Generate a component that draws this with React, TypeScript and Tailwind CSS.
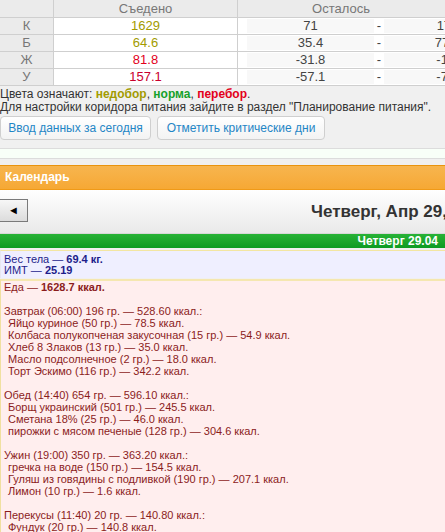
import React from "react";

const ROWS = [
  { k: "К", eaten: "1629", color: "text-[#a29b00]", left: "71", right: "171" },
  { k: "Б", eaten: "64.6", color: "text-[#a29b00]", left: "35.4", right: "77.4" },
  { k: "Ж", eaten: "81.8", color: "text-[#e3001b]", left: "-31.8", right: "-1.8" },
  { k: "У", eaten: "157.1", color: "text-[#c9002d]", left: "-57.1", right: "-7.1" },
];

const MEALS = [
  {
    title: "Завтрак (06:00) 196 гр. — 528.60 ккал.:",
    items: [
      "Яйцо куриное (50 гр.) — 78.5 ккал.",
      "Колбаса полукопченая закусочная (15 гр.) — 54.9 ккал.",
      "Хлеб 8 Злаков (13 гр.) — 35.0 ккал.",
      "Масло подсолнечное (2 гр.) — 18.0 ккал.",
      "Торт Эскимо (116 гр.) — 342.2 ккал.",
    ],
  },
  {
    title: "Обед (14:40) 654 гр. — 596.10 ккал.:",
    items: [
      "Борщ украинский (501 гр.) — 245.5 ккал.",
      "Сметана 18% (25 гр.) — 46.0 ккал.",
      "пирожки с мясом печеные (128 гр.) — 304.6 ккал.",
    ],
  },
  {
    title: "Ужин (19:00) 350 гр. — 363.20 ккал.:",
    items: [
      "гречка на воде (150 гр.) — 154.5 ккал.",
      "Гуляш из говядины с подливкой (190 гр.) — 207.1 ккал.",
      "Лимон (10 гр.) — 1.6 ккал.",
    ],
  },
  {
    title: "Перекусы (11:40) 20 гр. — 140.80 ккал.:",
    items: ["Фундук (20 гр.) — 140.8 ккал."],
  },
];

export default function App() {
  return (
    <div className="w-[445px] h-[532px] overflow-hidden bg-[#f0f0f0] font-['Liberation_Sans',Arial,sans-serif] text-[#333]">
      {/* nutrition table */}
      <div className="w-[520px] text-[13px]">
        <div className="flex h-[18px] bg-[#ebebeb] border-b border-[#cfcfcf] text-[#777]">
          <div className="w-[54px] border-r border-[#cfcfcf]" />
          <div className="w-[184px] border-r border-[#cfcfcf] flex items-center justify-center">Съедено</div>
          <div className="w-[206px] flex items-center justify-center">Осталось</div>
        </div>
        {ROWS.map((r) => (
          <div key={r.k} className="flex h-[17px] border-b border-[#cfcfcf]">
            <div className="w-[54px] bg-[#ebebeb] border-r border-[#cfcfcf] flex items-center justify-center text-[#777]">{r.k}</div>
            <div className={`w-[184px] bg-white border-r border-[#cfcfcf] flex items-center justify-center ${r.color}`}>{r.eaten}</div>
            <div className="flex-1 bg-white flex items-center pl-[9px] text-[#444]">
              <div className="w-[127px] h-[14px] bg-[#f8f8f8] flex items-center justify-center">{r.left}</div>
              <div className="w-[10px] text-center">-</div>
              <div className="w-[127px] h-[14px] bg-[#f8f8f8] flex items-center justify-center">{r.right}</div>
            </div>
          </div>
        ))}
      </div>

      {/* legend */}
      <div className="pt-[2px] text-[12px] leading-[13px] text-[#333]">
        <div>
          Цвета означают: <span className="font-bold text-[#a29b00]">недобор</span>,{" "}
          <span className="font-bold text-[#16a12b]">норма</span>,{" "}
          <span className="font-bold text-[#e3001b]">перебор</span>.
        </div>
        <div>Для настройки коридора питания зайдите в раздел "Планирование питания".</div>
      </div>

      {/* buttons */}
      <div className="flex gap-[6px] mt-[2px] text-[12px]">
        <button className="w-[151px] h-[24px] rounded-[4px] border border-[#cfcfcf] bg-gradient-to-b from-white to-[#f3f3f3] text-[#1f86c6]">
          Ввод данных за сегодня
        </button>
        <button className="w-[168px] h-[24px] rounded-[4px] border border-[#cfcfcf] bg-gradient-to-b from-white to-[#f3f3f3] text-[#1f86c6]">
          Отметить критические дни
        </button>
      </div>

      <div className="mt-[8px] h-[11px] bg-[#f8fff8] border-y border-[#dcdcdc]" />

      {/* calendar header */}
      <div className="mt-[6px] h-[25px] border-t border-[#e9940f] border-b border-b-[#f09a18] bg-gradient-to-b from-[#f7b54e] to-[#f6a834] flex items-center px-[5px] pb-[2px]">
        <span className="text-white font-bold text-[12px]">Календарь</span>
      </div>

      <div className="h-[44px] bg-gradient-to-b from-white to-[#e9e9e9] border-b border-[#d8d8d8] flex items-center">
        <button className="shrink-0 ml-[-1px] mb-[2px] w-[29px] h-[23px] border border-[#7a7a7a] bg-gradient-to-b from-[#f7f7f7] to-[#dcdcdc] flex items-center justify-center text-[11px] text-black">
          ◄
        </button>
        <div className="shrink-0 ml-[283px] text-[17px] font-bold text-[#333] whitespace-nowrap">Четверг, Апр 29, 2021</div>
      </div>

      <div className="h-[14px] bg-gradient-to-b from-[#27b236] to-[#0b9b22] flex items-center justify-end pr-[7px]">
        <span className="text-white font-bold text-[12px] leading-none">Четверг 29.04</span>
      </div>

      <div className="mt-[2px] bg-[#efefff] border-t border-[#f3e6a2] border-l border-l-[#e8e8f0] px-[3px] pt-[3px] pb-[2px] text-[11px] leading-[11px] text-[#1d1d8a]">
        <div>
          Вес тела — <b>69.4 кг.</b>
        </div>
        <div>
          ИМТ — <b>25.19</b>
        </div>
      </div>

      <div className="mt-[1px] bg-[#ffeeee] border-t-2 border-[#f5e7b0] border-l border-l-[#f0e0a0] px-[3px] text-[11px] leading-[12px] text-[#8b1c1c] h-[300px]">
        <div>
          Еда — <b>1628.7 ккал.</b>
        </div>
        {MEALS.map((m) => (
          <div key={m.title} className="mt-[12px]">
            <div>{m.title}</div>
            {m.items.map((it) => (
              <div key={it} className="pl-[4px]">
                {it}
              </div>
            ))}
          </div>
        ))}
      </div>
    </div>
  );
}
